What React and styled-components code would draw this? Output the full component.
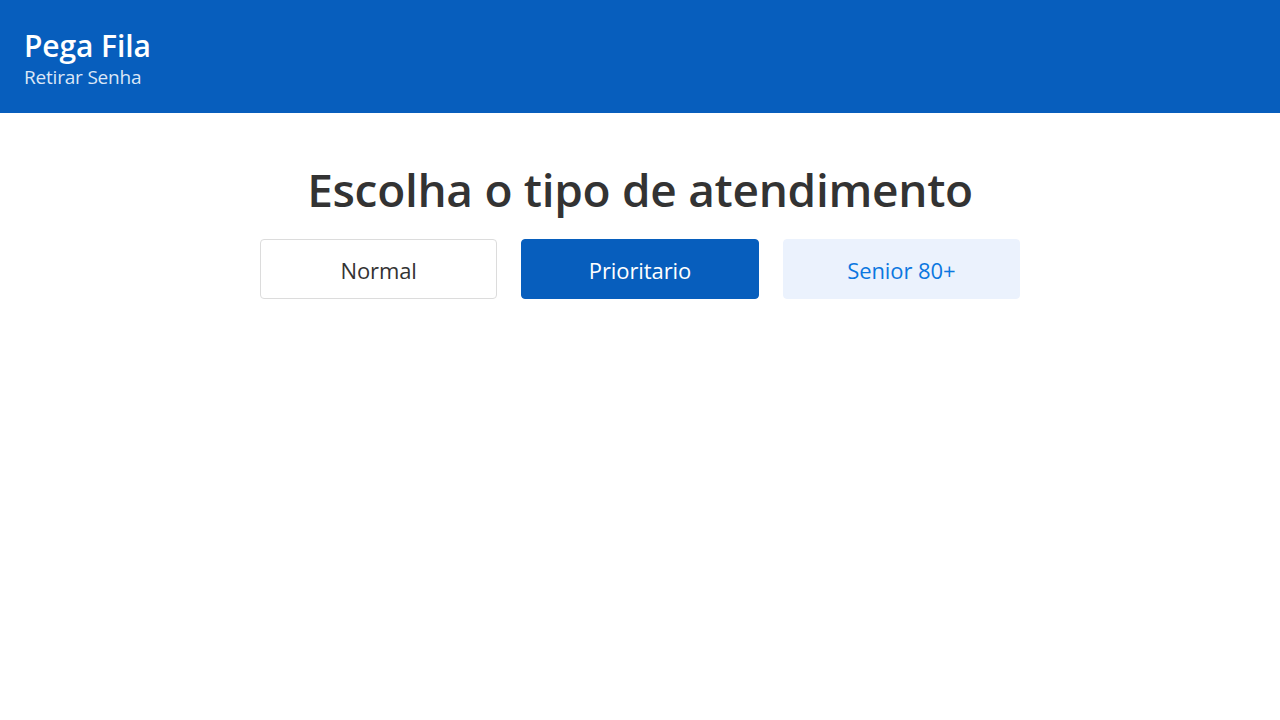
import React from 'react';
import styled, { createGlobalStyle } from 'styled-components';

const GlobalStyle = createGlobalStyle`
  * {
    box-sizing: border-box;
  }
  body {
    margin: 0;
    background: #ffffff;
    font-family: 'Open Sans', 'Noto Sans', sans-serif;
    color: #333333;
  }
`;

const Header = styled.header`
  display: flex;
  flex-direction: column;
  justify-content: center;
  height: 113px;
  padding: 4px 24px 0;
  background-color: #075ebd;
  color: #ffffff;
`;
const Title = styled.h1`
  margin: 0;
  font-size: 30px;
  font-weight: 600;
  line-height: 38px;
  letter-spacing: -0.1px;
`;
const Subtitle = styled.p`
  margin: 0;
  font-size: 19px;
  line-height: 25px;
  color: #dbe7f7;
  letter-spacing: -0.2px;
`;
const Main = styled.main`
  display: flex;
  flex-direction: column;
  align-items: center;
  padding-top: 45px;
`;
const Heading = styled.h2`
  margin: 0 0 19px;
  font-size: 46px;
  font-weight: 600;
  line-height: 62px;
  letter-spacing: -0.3px;
  color: #333333;
`;
const Options = styled.div`
  display: grid;
  grid-template-columns: repeat(3, 1fr);
  gap: 24px;
  width: 760px;
`;

const variants = {
  normal: { bg: '#ffffff', color: '#333333', border: '#dcdcdc' },
  primary: { bg: '#075ebd', color: '#ffffff', border: '#075ebd' },
  soft: { bg: '#ebf2fd', color: '#0b77e0', border: '#ebf2fd' },
};

const Option = styled.button`
  height: 60px;
  border-radius: 4px;
  border: 1px solid ${({ $variant }) => variants[$variant].border};
  background-color: ${({ $variant }) => variants[$variant].bg};
  color: ${({ $variant }) => variants[$variant].color};
  font-family: inherit;
  font-size: 22px;
  letter-spacing: -0.1px;
  padding-top: 2px;
  cursor: pointer;
`;

const options = [
  { label: 'Normal', variant: 'normal' },
  { label: 'Prioritario', variant: 'primary' },
  { label: 'Senior 80+', variant: 'soft' },
];

function App() {
  return (
    <>
      <GlobalStyle />
      <Header>
        <Title>Pega Fila</Title>
        <Subtitle>Retirar Senha</Subtitle>
      </Header>
      <Main>
        <Heading>Escolha o tipo de atendimento</Heading>
        <Options>
          {options.map((option) => (
            <Option key={option.label} $variant={option.variant}>
              {option.label}
            </Option>
          ))}
        </Options>
      </Main>
    </>
  );
}

export default App;
